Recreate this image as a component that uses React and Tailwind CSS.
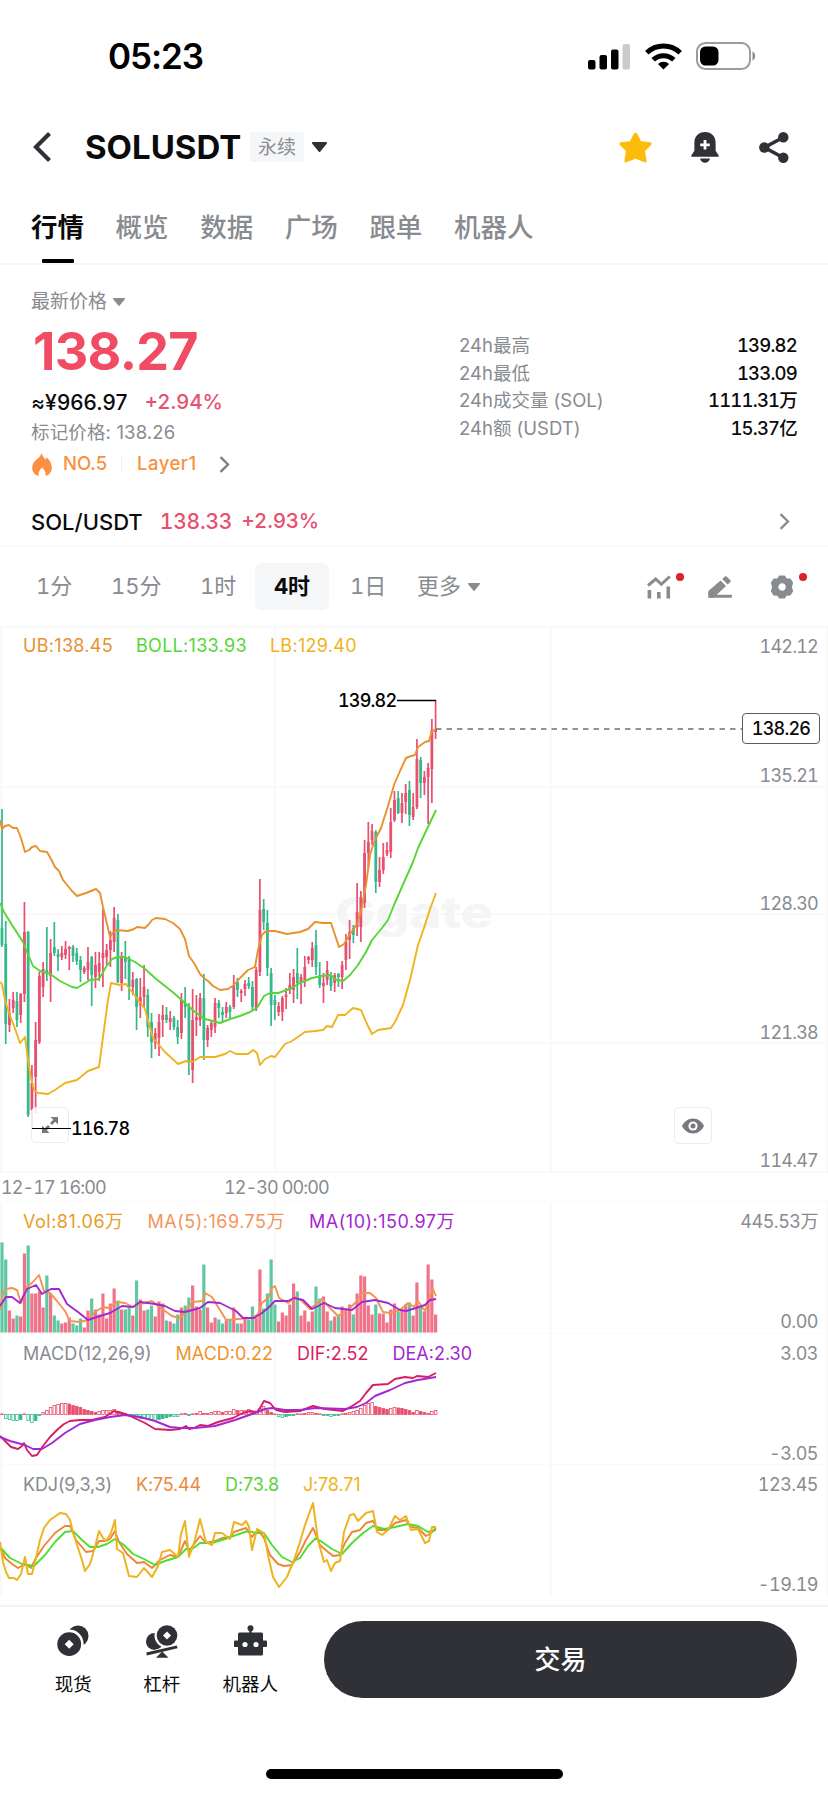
import React from 'react';

const RED = '#e8506e';
const GREEN = '#35b88c';
const ORANGE = '#e8912f';
const LIME = '#56d636';
const YELLOW = '#efb320';
const PURPLE = '#a428cf';
const PINK = '#d81e63';

const STEP = 3.738;
const xAt = (i) => 2 + i * STEP;

// [dir, high, bodyTop, bodyBottom, low] on the chart canvas, u = up, d = down
const candles = [
  ['d', 809, 928, 945, 947], ['d', 921, 944, 1024, 1044], ['u', 999, 1013, 1025, 1032], ['u', 992, 1000, 1008, 1013],
  ['d', 992, 1001, 1020, 1027], ['u', 993, 994, 1015, 1023], ['u', 902, 932, 994, 1002], ['d', 931, 932, 1115, 1117],
  ['u', 1065, 1083, 1110, 1128], ['u', 1022, 1040, 1077, 1113], ['u', 972, 976, 1042, 1044], ['u', 962, 969, 987, 997],
  ['d', 927, 970, 973, 981], ['u', 939, 953, 976, 1002], ['d', 922, 947, 953, 956], ['d', 949, 954, 957, 971],
  ['u', 946, 953, 957, 960], ['u', 941, 949, 955, 959], ['u', 946, 947, 949, 970], ['d', 945, 947, 956, 962],
  ['d', 948, 953, 961, 965], ['d', 956, 960, 970, 982], ['u', 966, 968, 972, 974], ['u', 947, 962, 970, 980],
  ['d', 956, 957, 975, 1006], ['u', 952, 965, 977, 988], ['u', 952, 963, 972, 981], ['u', 909, 953, 958, 987],
  ['u', 944, 950, 957, 965], ['u', 931, 940, 950, 967], ['u', 907, 918, 942, 952], ['d', 914, 920, 982, 983],
  ['u', 952, 958, 983, 991], ['d', 941, 957, 962, 979], ['d', 956, 958, 987, 1000], ['u', 972, 980, 987, 995],
  ['d', 978, 979, 1007, 1030], ['u', 978, 997, 1005, 1018], ['u', 965, 987, 997, 1008], ['d', 989, 995, 1027, 1037],
  ['d', 1013, 1022, 1042, 1058], ['u', 1028, 1033, 1043, 1049], ['u', 1014, 1022, 1038, 1056], ['u', 1005, 1015, 1020, 1037],
  ['d', 1007, 1015, 1020, 1023], ['u', 1011, 1018, 1022, 1030], ['d', 1016, 1018, 1027, 1030], ['d', 1020, 1027, 1037, 1044],
  ['u', 993, 1000, 1033, 1039], ['d', 987, 1003, 1007, 1018], ['d', 1003, 1007, 1063, 1075], ['u', 989, 1020, 1070, 1083],
  ['u', 995, 1017, 1020, 1036], ['u', 993, 998, 1020, 1026], ['d', 974, 998, 1040, 1060], ['u', 1025, 1028, 1040, 1047],
  ['u', 1020, 1023, 1030, 1037], ['u', 998, 1003, 1027, 1033], ['d', 1000, 1003, 1008, 1018], ['d', 1007, 1012, 1015, 1022],
  ['u', 1002, 1007, 1013, 1018], ['d', 1005, 1007, 1012, 1018], ['u', 975, 985, 1007, 1009], ['d', 978, 982, 990, 997],
  ['u', 989, 991, 993, 1002], ['u', 980, 984, 989, 996], ['d', 977, 983, 986, 989], ['d', 981, 987, 1007, 1011],
  ['u', 967, 970, 1008, 1011], ['u', 879, 910, 972, 976], ['d', 899, 909, 922, 930], ['d', 910, 923, 968, 976],
  ['d', 968, 973, 1005, 1026], ['d', 995, 1000, 1005, 1020], ['u', 1002, 1006, 1012, 1016], ['u', 996, 998, 1012, 1021],
  ['u', 988, 995, 997, 1009], ['u', 973, 985, 990, 994], ['u', 969, 977, 990, 1003], ['d', 948, 973, 983, 999],
  ['u', 974, 977, 983, 1004], ['u', 956, 967, 982, 987], ['u', 956, 957, 960, 964], ['u', 942, 948, 960, 967],
  ['d', 930, 945, 967, 975], ['d', 962, 975, 985, 988], ['u', 973, 983, 986, 1003], ['u', 961, 970, 980, 985],
  ['d', 972, 975, 986, 991], ['u', 973, 975, 983, 992], ['d', 973, 974, 977, 987], ['u', 961, 965, 977, 989],
  ['u', 934, 942, 960, 970], ['u', 920, 932, 940, 959], ['d', 925, 928, 935, 943], ['u', 883, 912, 927, 936],
  ['u', 891, 897, 927, 942], ['u', 840, 853, 903, 908], ['u', 822, 842, 853, 868], ['u', 824, 831, 840, 845],
  ['d', 830, 832, 882, 893], ['u', 857, 870, 882, 887], ['u', 843, 857, 870, 874], ['u', 842, 850, 854, 856],
  ['u', 808, 822, 852, 858], ['u', 791, 800, 820, 822], ['d', 791, 798, 813, 814], ['u', 793, 803, 813, 823],
  ['u', 784, 793, 802, 814], ['d', 781, 790, 815, 826], ['u', 793, 807, 817, 820], ['u', 739, 759, 807, 809],
  ['d', 757, 760, 783, 798], ['u', 771, 777, 783, 795], ['u', 763, 768, 777, 824], ['u', 719, 730, 769, 803],
  ['u', 700, 729, 732, 739],
];

const volumes = [
  90, 73, 22, 14, 17, 16, 79, 87, 39, 39, 41, 25, 57, 39, 17, 12, 9, 10, 15, 9, 7, 14, 5, 22, 34, 23, 18, 39, 14, 29,
  44, 32, 23, 23, 25, 17, 52, 33, 22, 23, 27, 16, 31, 29, 12, 11, 9, 18, 25, 27, 35, 47, 26, 23, 68, 25, 10, 15, 13, 9,
  12, 13, 25, 9, 9, 14, 13, 26, 15, 63, 24, 39, 73, 28, 11, 20, 17, 28, 49, 41, 17, 22, 11, 21, 46, 34, 36, 21, 12, 16,
  18, 26, 23, 28, 18, 39, 57, 56, 27, 18, 28, 19, 19, 10, 23, 29, 21, 23, 28, 30, 17, 50, 27, 21, 68, 53, 18,
];

const macdBars = [
  0, -4, -5, -6, -6, -5, 0, -6, -8, -6, -1, 2, 4, 7, 9, 10, 11, 11, 10.5, 9, 8, 7, 5, 4, 3, 2, 3, 4, 4, 4, 5, 3, 2, 1,
  -1, -2, -3, -4, -4, -4, -5, -6, -5, -4, -3, -2, -2, -2, 0, 1, -1, 0, 1, 3, 1, 1, 2, 3, 3, 2, 3, 3, 5, 4, 4, 4, 5, 3,
  3, 6, 8, 4, 2, 0, -2, -3, -2, -1, -1, 0, 0, 1, 2, 2, 1, 0, -1, -1, -2, -1, -1, 0, 1, 2, 3, 4, 6, 9, 11, 12, 8, 7, 6,
  5, 6, 7, 6.5, 6, 5, 4, 2, 4, 3, 2, 1, 3, 4,
];

const bollUpper =
  '0,820 2,829 5,826 9,825 13,828 17,828 21,838 25,852 29,850 32,847 36,846 40,851 47,852 51,859 55,867 59,871 63,880 72,891 77,896 86,893 96,889 100,893 103,907 107,924 110,937 112,934 116,930 128,931 134,929 137,927 145,928 149,924 152,920 156,918 165,919 173,923 180,929 185,939 189,956 194,963 200,974 205,979 208,981 213,986 220,990 228,989 234,985 240,978 248,970 255,967 258,950 262,935 266,931 275,931 287,934 300,932 308,929 315,922 323,923 331,923 335,935 339,947 344,944 350,934 357,924 361,912 366,885 370,855 374,842 381,828 388,806 394,785 400,771 406,758 411,756 415,755 418,747 425,742 429,741 432,731 436,729';
const bollMid =
  '0,903 4,912 12,925 23,942 27,952 33,966 40,971 50,974 60,981 72,987 77,988 90,980 99,979 106,967 112,959 118,957 125,957 135,962 145,969 155,978 165,986 175,994 185,1003 195,1012 205,1019 213,1021 220,1023 230,1019 240,1016 250,1012 257,1008 264,996 270,993 278,993 290,989 300,983 312,978 322,976 330,975 337,980 343,981 350,975 358,965 366,952 372,940 382,928 388,920 394,905 405,880 413,862 418,848 427,829 436,810';
const bollLower =
  '0,982 2,984 5,1000 9,1013 14,1026 20,1043 25,1037 28,1060 31,1078 34,1090 38,1093 48,1094 55,1090 65,1083 77,1080 88,1071 99,1067 103,1037 108,1000 111,983 120,985 126,984 132,992 145,1009 149,1024 153,1038 165,1052 178,1064 186,1061 192,1062 200,1057 215,1057 225,1054 230,1051 236,1054 248,1054 253,1050 257,1053 260,1065 265,1059 271,1056 275,1057 285,1044 292,1041 305,1032 315,1031 323,1030 327,1026 332,1027 338,1015 345,1015 353,1008 361,1010 367,1024 372,1034 378,1030 391,1028 395,1022 403,1005 410,980 418,945 424,928 430,909 436,893';

const ma5 =
  '0,1310 3,1293 6,1289 12,1288 17,1290 21,1303 27,1287 33,1282 39,1275 44,1291 50,1293 57,1301 65,1311 70,1321 80,1322 88,1320 95,1312 103,1307 108,1308 118,1302 125,1303 133,1307 140,1304 152,1301 158,1306 165,1311 172,1316 179,1318 185,1313 192,1302 203,1301 205,1293 212,1297 220,1310 226,1320 238,1319 252,1318 258,1314 262,1303 268,1298 272,1288 275,1286 279,1298 288,1303 296,1297 303,1302 310,1309 322,1299 330,1308 338,1316 350,1308 356,1302 362,1293 370,1293 376,1298 383,1312 390,1313 400,1310 408,1303 414,1307 418,1301 425,1311 430,1296 433,1289 436,1296';
const ma10 =
  '0,1306 6,1297 12,1297 20,1303 27,1289 36,1285 42,1294 51,1289 59,1289 67,1304 78,1312 88,1320 100,1316 110,1313 122,1306 133,1307 140,1302 155,1304 165,1306 175,1311 185,1312 200,1308 208,1302 220,1303 228,1307 236,1311 243,1318 254,1318 262,1313 268,1308 275,1301 288,1301 294,1298 303,1300 312,1309 324,1303 335,1308 352,1310 362,1302 375,1300 388,1303 400,1310 406,1311 416,1308 425,1305 430,1300 436,1299';

const dif =
  '0,1436 6,1442 11,1447 18,1449 22,1446 24,1443 27,1450 32,1456 37,1455 43,1446 50,1437 58,1429 64,1424 70,1421 80,1420 92,1420 105,1417 114,1411 122,1413 130,1416 145,1423 155,1429 170,1430 180,1429 186,1426 189,1429 194,1428 200,1425 208,1426 218,1422 233,1418 243,1413 250,1411 257,1412 260,1408 264,1401 270,1403 276,1410 285,1412 300,1411 313,1406 325,1409 343,1411 352,1406 360,1401 366,1393 373,1385 388,1384 395,1379 405,1377 413,1378 417,1376 428,1377 436,1373';
const dea =
  '0,1437 10,1441 25,1445 33,1449 42,1449 52,1443 65,1433 80,1424 95,1420 110,1417 125,1415 140,1417 155,1421 170,1427 180,1428 195,1428 215,1426 235,1420 255,1413 265,1409 272,1408 285,1410 300,1410 315,1408 345,1409 357,1407 366,1403 375,1396 390,1390 405,1383 418,1380 436,1377';

const kdjJ =
  '0,1542 3,1562 6,1572 9,1578 14,1578 17,1580 21,1574 25,1557 28,1574 32,1574 36,1558 40,1540 44,1528 50,1520 60,1513 66,1514 70,1520 73,1532 77,1545 82,1560 85,1571 90,1564 95,1547 99,1531 103,1538 106,1541 111,1533 115,1520 117,1549 123,1553 129,1576 137,1577 144,1568 152,1577 158,1566 162,1552 170,1550 178,1557 181,1534 185,1521 189,1557 195,1540 200,1519 206,1542 212,1545 215,1533 222,1533 230,1539 234,1522 242,1525 246,1521 249,1527 252,1550 257,1529 264,1533 268,1555 273,1577 279,1587 287,1577 294,1560 300,1542 305,1525 313,1503 318,1540 324,1562 327,1560 331,1571 335,1563 340,1561 344,1532 350,1515 354,1514 358,1521 366,1513 373,1511 377,1532 382,1535 388,1530 395,1516 400,1520 406,1516 411,1530 418,1529 425,1543 429,1541 432,1527 436,1527';
const kdjK =
  '0,1547 5,1558 12,1564 18,1568 25,1564 31,1568 36,1558 44,1546 55,1533 65,1526 70,1526 76,1540 82,1547 86,1552 93,1551 99,1541 106,1541 110,1539 115,1531 119,1542 127,1554 137,1563 144,1562 152,1568 160,1560 170,1555 178,1557 185,1541 189,1551 200,1536 206,1543 215,1541 222,1538 230,1537 234,1532 246,1528 252,1537 258,1530 264,1538 270,1555 278,1564 284,1566 292,1565 300,1552 306,1540 313,1528 320,1545 328,1552 333,1556 340,1555 345,1543 352,1532 360,1530 366,1523 373,1521 378,1530 388,1530 395,1523 406,1520 411,1527 418,1528 426,1536 430,1534 436,1528';
const kdjD =
  '0,1547 10,1558 22,1564 34,1566 45,1555 55,1542 65,1532 73,1531 82,1540 90,1547 98,1547 107,1544 115,1539 124,1545 133,1554 144,1559 155,1565 165,1561 178,1557 186,1549 192,1549 200,1543 212,1543 225,1539 236,1535 248,1531 256,1533 264,1533 272,1545 282,1557 292,1562 300,1558 308,1546 316,1538 322,1542 332,1549 342,1554 352,1543 363,1533 373,1526 384,1529 395,1527 408,1524 418,1526 428,1532 436,1530';

const Line = ({ points, color, width = 1.9 }) => (
  <polyline points={points} fill="none" stroke={color} strokeWidth={width} strokeLinejoin="round" />
);

const Caret = ({ className }) => (
  <svg viewBox="0 0 12 8" className={className} fill="currentColor">
    <path d="M.8 0h10.4c.7 0 1 .8.6 1.3L6.700 7.500a.9.9 0 0 1-1.4 0L.2 1.300C-.2.8.100 0 .8 0Z" />
  </svg>
);

const Chevron = ({ className }) => (
  <svg viewBox="0 0 10 16" className={className} fill="none" stroke="currentColor" strokeWidth="2.200">
    <path d="m1.300 1 7 7-7 7" />
  </svg>
);

const StatusBar = () => (
  <div className="flex h-[108px] items-center justify-between pl-[108px] pr-[72px] pt-[4px]">
    <span className="text-[35px] font-semibold tracking-[-1.100px] text-black">05:23</span>
    <div className="flex items-center gap-[14px]">
      <svg viewBox="0 0 43 27" className="h-[27px] w-[43px]">
        <rect x="0" y="17" width="7.500" height="9.500" rx="2" />
        <rect x="11.500" y="12" width="7.500" height="14.500" rx="2" />
        <rect x="23" y="6.500" width="7.500" height="20" rx="2" />
        <rect x="34.500" y="1" width="7.500" height="25.500" rx="2" fill="#cbcbcb" />
      </svg>
      <svg viewBox="0 0 37 27" className="h-[27px] w-[37px]" fill="none" stroke="#000" strokeWidth="5">
        <path d="M1.800 9.700a24 24 0 0 1 33.400 0" />
        <path d="M8.200 16.800a15 15 0 0 1 20.600 0" />
        <path d="M18.500 26.600 12.900 21a8 8 0 0 1 11.200 0Z" fill="#000" stroke="none" />
      </svg>
      <svg viewBox="0 0 60 28" className="h-[28px] w-[60px]">
        <rect x="1" y="1" width="53" height="26" rx="8.500" fill="none" stroke="#9c9c9c" strokeWidth="2" />
        <rect x="4" y="4.500" width="18.500" height="19" rx="5.500" />
        <path d="M56.500 9.500c3.600 1.500 3.600 7.500 0 9Z" fill="#8c8c8c" />
      </svg>
    </div>
  </div>
);

const Header = () => (
  <div className="flex h-[78px] items-center pl-[32px] pr-[38px] text-[#2f3136]">
    <svg viewBox="0 0 20 30" className="h-[30px] w-[20px]" fill="none" stroke="currentColor" strokeWidth="4.200">
      <path d="M17.500 1.500 4 15l13.500 13.500" />
    </svg>
    <span className="ml-[33px] w-[155px] whitespace-nowrap pt-[2px] text-[33px] font-bold text-[#0b0b0c]">SOLUSDT</span>
    <span className="ml-[10px] flex h-[30px] w-[54px] items-center justify-center rounded-[3px] bg-[#f5f6f8] pt-[2px] text-[19px] text-[#8b8e93]">
      永续
    </span>
    <Caret className="ml-[8px] h-[10px] w-[15px]" />
    <div className="ml-auto flex items-center">
      <svg viewBox="0 0 33 31" className="h-[31px] w-[33px]" fill="#fdbc0b">
        <path d="M14.900 1.600c.7-1.300 2.500-1.300 3.200 0l4 7.600 9 1.100c1.500.2 2 2 .9 3L26 19l1.600 9.600c.2 1.400-.8 2.300-2.100 1.700L16.500 26.800l-9 3.500c-1.300.6-2.300-.3-2.100-1.700L7 19l-6-5.700c-1.100-1-.6-2.800.9-3l9-1.100Z" />
      </svg>
      <svg viewBox="0 0 28 31" className="ml-[39px] h-[31px] w-[28px]" fill="currentColor">
        <path d="M14 0C7.600 0 3.400 4.600 3.400 10.500v8.300L.3 23.500c-.4.700 0 1.300.7 1.300h26c.7 0 1.100-.6.7-1.300l-3.100-4.700v-8.300C24.600 4.600 20.400 0 14 0Z" />
        <path d="M9 26.500h10c-.6 2.600-2.400 4.200-5 4.200s-4.400-1.600-5-4.200Z" />
        <path d="M14 8v9.600M9.200 12.800h9.600" stroke="#fff" strokeWidth="2.800" />
      </svg>
      <svg viewBox="0 0 30 31" className="ml-[40px] mr-px h-[31px] w-[30px]" fill="currentColor">
        <path d="M24 5.500 5.500 15.500 24 25.500" fill="none" stroke="currentColor" strokeWidth="3.600" />
        <circle cx="24.300" cy="5.300" r="5.200" />
        <circle cx="5.300" cy="15.500" r="5.200" />
        <circle cx="24.300" cy="25.700" r="5.200" />
      </svg>
    </div>
  </div>
);

const Tabs = () => {
  const tabs = ['行情', '概览', '数据', '广场', '跟单', '机器人'];
  return (
    <div className="flex h-[79px] gap-[31.600px] border-b-2 border-[#f6f7f8] pl-[31px]">
      {tabs.map((tab, index) => (
        <div
          key={tab}
          className={
            index === 0
              ? 'flex flex-col items-center justify-between pt-[21px] text-[26.500px] font-bold leading-[40px] text-[#0b0b0c]'
              : 'pt-[21px] text-[26.500px] font-medium leading-[40px] text-[#888b8f]'
          }
        >
          {tab}
          {index === 0 && <span className="h-[4px] w-[32px] rounded-[1px] bg-black" />}
        </div>
      ))}
    </div>
  );
};

const PriceSummary = () => {
  const stats = [
    { label: '24h最高', value: '139.82' },
    { label: '24h最低', value: '133.09' },
    { label: '24h成交量 (SOL)', value: '1111.31万' },
    { label: '24h额 (USDT)', value: '15.37亿' },
  ];

  return (
    <div className="flex h-[217px] pl-[31px] pr-[31px] pt-[21px] text-[#888b8f]">
      <div className="w-[428px]">
        <div className="flex h-[32px] items-center text-[19px]">
          最新价格
          <Caret className="ml-[6px] h-[8px] w-[12px]" />
        </div>
        <div className="flex h-[68px] items-center pl-[2px] text-[52px] font-bold tracking-[-0.700px] text-[#f04c63]">138.27</div>
        <div className="flex h-[33px] items-center text-[21px] font-medium">
          <span className="tracking-[0.100px] text-[#0b0b0c]">≈¥966.97</span>
          <span className="ml-[17px] text-[20.500px] text-[#e8506e]">+2.94%</span>
        </div>
        <div className="flex h-[27px] items-center text-[18.500px] tracking-[0.150px]">标记价格: 138.26</div>
        <div className="flex h-[36px] items-center text-[18.500px] font-medium text-[#fb9043]">
          <svg viewBox="0 0 20 23" className="ml-px h-[23px] w-[20px]" fill="#fb9043">
            <path d="M9.500 0c.8 2.900 2.400 4.500 4 6.600.6-.7.9-1.500 1-2.300 3.300 3 5.300 6.500 5.300 10.400 0 4.300-2.500 7.200-6.300 8.300.7-2.900-.4-5.600-3.300-8.500-3.200 2.700-4.200 5.600-3.400 8.500C2.800 21.900.2 19 .2 14.900.2 11 2 9 4.500 6.600 6.700 4.600 8.800 3 9.500 0Z" />
          </svg>
          <span className="ml-[11px] w-[43px] whitespace-nowrap">NO.5</span>
          <span className="ml-[15px] h-[18px] w-px bg-[#efefef]" />
          <span className="ml-[15px] tracking-[0.500px]">Layer1</span>
          <Chevron className="ml-[22px] h-[17px] w-[11px] text-[#7b7e82]" />
        </div>
      </div>
      <div className="flex-1 pt-[46px]">
        {stats.map((item) => (
          <div key={item.label} className="flex h-[27.700px] items-center justify-between text-[18.500px]">
            <span>{item.label}</span>
            <span className="font-medium tabular-nums tracking-[-0.800px] text-[#0b0b0c]">{item.value}</span>
          </div>
        ))}
      </div>
    </div>
  );
};

const PairRow = () => (
  <div className="flex h-[65px] items-center border-b-2 border-[#fbfbfc] pl-[31px] pr-[38px] pt-[16px] text-[21px] font-medium leading-none">
    <span className="text-[22px] text-[#0b0b0c]">SOL/USDT</span>
    <span className="ml-[17px] tabular-nums tracking-[-0.200px] text-[#e8506e]">138.33</span>
    <span className="ml-[9px] text-[20.500px] text-[#e8506e]">+2.93%</span>
    <Chevron className="ml-auto h-[17px] w-[11px] text-[#888b8f]" />
  </div>
);

const Intervals = () => (
  <div className="flex h-[79px] items-center pl-[36px] pr-[34px] text-[22px] tabular-nums text-[#888b8f]">
    <span className="w-[75px]">1分</span>
    <span className="w-[89px]">15分</span>
    <span className="w-[55px]">1时</span>
    <span className="flex h-[47px] w-[74px] items-center justify-center rounded-[7px] bg-[#f4f6f8] font-bold text-[#0b0b0c]">4时</span>
    <span className="ml-[21px] w-[67px]">1日</span>
    <span>更多</span>
    <Caret className="ml-[7px] h-[8px] w-[12px]" />
    <div className="ml-auto flex items-center">
      <div className="relative">
        <svg viewBox="0 0 24 24" className="h-[24px] w-[24px]" fill="none" stroke="currentColor" strokeWidth="3.600">
          <path d="M1 10.500 8.700 4l5.600 5.300L22.800 1.500" strokeWidth="3" />
          <path d="M2.400 15v8.500M11.800 17v6.500M21.300 11.500v12" />
        </svg>
        <span className="absolute -right-[13px] -top-[2px] h-[8px] w-[8px] rounded-full bg-[#dc2127]" />
      </div>
      <svg viewBox="0 0 24 24" className="ml-[37px] h-[24px] w-[24px]" fill="currentColor">
        <path d="M12.600 5.500 1.200 15.300A3 3 0 0 0 .2 17.500v5.300h5.300L18 10.900Z" />
        <path d="m14.200 4.100 2.700-2.500c.5-.5 1.200-.5 1.700 0l3.800 3.700c.5.5.5 1.200 0 1.700l-2.800 2.500Z" />
        <path d="M3 19.800h20.800v3H1Z" />
      </svg>
      <div className="relative ml-[38px]">
        <svg viewBox="0 0 24 24" className="h-[24px] w-[24px]" fill="currentColor">
          <path
            fillRule="evenodd"
            d="M9.600 1.200h4.800l1.800 2.700 3.800.2 2.400 3.800L21.200 12l1.200 4.100-2.400 3.800-3.800.2-1.800 2.700H9.600l-1.800-2.700-3.800-.2-2.400-3.800L2.800 12 1.600 7.900 4 4.100l3.800-.2ZM12 7.600a4.400 4.400 0 1 0 0 8.800 4.400 4.400 0 0 0 0-8.800Z"
            stroke="currentColor"
            strokeWidth="1.400"
            strokeLinejoin="round"
          />
        </svg>
        <span className="absolute -right-[13px] -top-[2px] h-[8px] w-[8px] rounded-full bg-[#dc2127]" />
      </div>
    </div>
  </div>
);

const Grid = ({ top, bottom, rows = [] }) => (
  <g stroke="#f9f9fa" strokeWidth="2">
    {[1, 275, 551, 827].map((x) => (
      <line key={x} x1={x} x2={x} y1={top} y2={bottom} />
    ))}
    {rows.map((y) => (
      <line key={y} x1="0" x2="828" y1={y} y2={y} />
    ))}
  </g>
);

const MainChart = () => (
  <div className="relative h-[547px]">
    <svg viewBox="0 626 828 547" className="absolute inset-0 h-full w-full">
      <Grid top={626} bottom={1172} rows={[627, 787, 914, 1043, 1172]} />
      <text x="335" y="928" fontSize="43" fontWeight="800" fill="#f4f5f6" textLength="158" lengthAdjust="spacingAndGlyphs">
        Ggate
      </text>
      {candles.map(([dir, high, top, bottom, low], i) => {
        const color = dir === 'u' ? RED : GREEN;
        return (
          <g key={i} fill={color}>
            <rect x={xAt(i) - 0.85} y={high} width="1.7" height={low - high} />
            <rect x={xAt(i) - 1.4} y={top} width="2.8" height={bottom - top} />
          </g>
        );
      })}
      <Line points={bollUpper} color={ORANGE} />
      <Line points={bollMid} color={LIME} />
      <Line points={bollLower} color={YELLOW} />
      <line x1="397" x2="436" y1="700.5" y2="700.5" stroke="#000" strokeWidth="1.5" />
      <line x1="436" x2="742" y1="729" y2="729" stroke="#6d6f73" strokeWidth="1.5" strokeDasharray="5.500 5" />
    </svg>

    <div className="absolute left-[23px] top-[9px] flex gap-[23px] text-[18px] leading-[22px] tracking-[0.300px]">
      <span className="text-[#e8912f]">UB:138.45</span>
      <span className="text-[#56d636]">BOLL:133.93</span>
      <span className="text-[#efb320]">LB:129.40</span>
    </div>

    <div className="absolute right-[10px] top-[11px] flex h-[534px] flex-col justify-between text-right text-[18px] leading-[20px] tabular-nums tracking-[-0.800px] text-[#888b8f]">
      {['142.12', '135.21', '128.30', '121.38', '114.47'].map((price) => (
        <span key={price}>{price}</span>
      ))}
    </div>

    <span className="absolute left-[338px] top-[64px] text-[18px] font-medium leading-[22px] tabular-nums tracking-[-0.800px] text-black">
      139.82
    </span>
    <span className="absolute left-[742px] top-[87px] flex h-[31px] w-[78px] items-center justify-center rounded-[4px] border border-[#5a5c60] bg-white text-[18px] font-medium tabular-nums tracking-[-0.800px] text-[#0b0b0c]">
      138.26
    </span>

    <div className="absolute left-[31px] top-[481px] flex h-[36px] w-[38px] items-center justify-center rounded-[5px] border border-[#ececee] bg-white/80">
      <svg viewBox="0 0 18 18" className="h-[18px] w-[18px]" fill="#77797d">
        <path d="M9.500 1H17v7.500l-2.700-2.700-3.300 3.300-2-2 3.300-3.300Z" />
        <path d="M8.500 17H1V9.500l2.700 2.700L7 8.900l2 2-3.200 3.300Z" />
      </svg>
    </div>
    <span className="absolute left-[32px] top-[502px] h-px w-[39px] bg-black" />
    <span className="absolute left-[71px] top-[492px] text-[18px] font-medium leading-[22px] tabular-nums tracking-[-0.800px] text-black">
      116.78
    </span>

    <div className="absolute left-[674px] top-[481px] flex h-[37px] w-[38px] items-center justify-center rounded-[5px] border border-[#ececee] bg-white">
      <svg viewBox="0 0 22 16" className="h-[16px] w-[22px]">
        <path d="M0 8c2.500-4.800 6.400-7.500 11-7.500S19.500 3.200 22 8c-2.500 4.800-6.400 7.500-11 7.500S2.500 12.800 0 8Z" fill="#77797d" />
        <circle cx="11" cy="8" r="4.600" fill="#fff" />
        <circle cx="11" cy="8" r="2.500" fill="#77797d" />
      </svg>
    </div>
  </div>
);

const TimeAxis = () => (
  <div className="flex h-[28px] items-center pl-[1px] pt-[1px] text-[18px] tabular-nums tracking-[-0.900px] text-[#888b8f]">
    <span className="w-[223px]">12-17 16:00</span>
    <span>12-30 00:00</span>
  </div>
);

// Sub chart with its legend on the left and the value range on the right
const Indicator = ({ top, legend, max, min, className, children }) => (
  <div className={`relative h-[132px] ${className}`}>
    <svg viewBox={`0 ${top} 828 132`} className="absolute inset-0 h-full w-full">
      <Grid top={top} bottom={top + 132} rows={[top]} />
      {children}
    </svg>
    <div className="relative flex h-full justify-between pl-[23px] pr-[10px] pt-[10px] text-[18px] leading-[22px]">
      <div className="flex gap-[24px] whitespace-nowrap">{legend}</div>
      <div className="flex flex-col justify-between text-right tabular-nums tracking-[-0.500px] text-[#888b8f]">
        <span>{max}</span>
        <span>{min}</span>
      </div>
    </div>
  </div>
);

const VolumeChart = () => (
  <Indicator
    top={1201}
    max="445.53万"
    min="0.00"
    className="tracking-[0.500px]"
    legend={
      <>
        <span className="text-[#eb9c24]">Vol:81.06万</span>
        <span className="text-[#f5955a]">MA(5):169.75万</span>
        <span className="text-[#a428cf]">MA(10):150.97万</span>
      </>
    }
  >
    {volumes.map((h, i) => (
      <rect
        key={i}
        x={xAt(i) - 1.6}
        y={1332.5 - h}
        width="3.2"
        height={h}
        fill={candles[i][0] === 'u' ? '#f0738a' : '#5fc8a2'}
      />
    ))}
    <Line points={ma5} color="#f3944f" />
    <Line points={ma10} color={PURPLE} />
  </Indicator>
);

const MacdChart = () => (
  <Indicator
    top={1333}
    max="3.03"
    min="-3.05"
    className="tracking-normal"
    legend={
      <>
        <span className="text-[#888b8f]">MACD(12,26,9)</span>
        <span className="text-[#f0932b]">MACD:0.22</span>
        <span className="text-[#d81e63]">DIF:2.52</span>
        <span className="text-[#a428cf]">DEA:2.30</span>
      </>
    }
  >
    {macdBars.map((v, i) => {
      const color = v >= 0 ? RED : GREEN;
      const h = Math.max(Math.abs(v), 0.6);
      // growing bars are drawn hollow
      const hollow = i > 0 && Math.abs(v) >= Math.abs(macdBars[i - 1]) && Math.abs(v) > 1;
      return (
        <rect
          key={i}
          x={xAt(i) - 1.3}
          y={v >= 0 ? 1414.5 - h : 1414.5}
          width="2.6"
          height={h}
          fill={hollow ? '#fff' : color}
          stroke={color}
          strokeWidth="0.8"
        />
      );
    })}
    <Line points={dif} color={PINK} />
    <Line points={dea} color={PURPLE} />
  </Indicator>
);

const KdjChart = () => (
  <Indicator
    top={1464}
    max="123.45"
    min="-19.19"
    className="-mt-px tracking-[-0.150px]"
    legend={
      <>
        <span className="text-[#888b8f]">KDJ(9,3,3)</span>
        <span className="text-[#ea8a3c]">K:75.44</span>
        <span className="text-[#56d636]">D:73.8</span>
        <span className="text-[#efb320]">J:78.71</span>
      </>
    }
  >
    <Line points={kdjK} color="#ee8434" />
    <Line points={kdjD} color="#4ede2c" />
    <Line points={kdjJ} color={YELLOW} width={2} />
  </Indicator>
);

const SpotIcon = () => (
  <svg viewBox="0 0 32 32" className="h-[32px] w-[32px]" fill="#2f3136">
    <circle cx="21" cy="11" r="10.500" />
    <circle cx="12.200" cy="19" r="14.400" fill="#fff" />
    <circle cx="12.200" cy="19.200" r="11.900" />
    <path d="m12.200 14.700 4.500 4.500-4.500 4.500-4.500-4.500Z" fill="#fff" />
  </svg>
);

const MarginIcon = () => (
  <svg viewBox="0 0 33 33" className="h-[33px] w-[33px]" fill="#2f3136">
    <circle cx="9.500" cy="16.500" r="8.500" />
    <circle cx="22" cy="10.500" r="12.500" fill="#fff" />
    <circle cx="22" cy="10.500" r="10.300" />
    <path d="m22 6.500 4 4-4 4-4-4Z" fill="#fff" />
    <path d="M.5 27 32.300 19.500v5L1.500 31Z" fill="#fff" />
    <path d="m1.200 27.600 30.600-7 .7 2.600-30.600 7.200Z" />
    <path d="m17.200 26.400 6.300 6.300H11Z" />
  </svg>
);

const RobotIcon = () => (
  <svg viewBox="0 0 33 32" className="h-[32px] w-[33px]" fill="#2f3136">
    <circle cx="16.500" cy="3.200" r="3" />
    <rect x="15.300" y="4" width="2.400" height="5" />
    <rect x="4" y="7.500" width="25" height="23" rx="1.500" />
    <rect x="0" y="15.500" width="33" height="6.500" rx="1" />
    <circle cx="11" cy="19.500" r="2.600" fill="#fff" />
    <circle cx="22" cy="19.500" r="2.600" fill="#fff" />
  </svg>
);

const BottomBar = () => {
  const actions = [
    { label: '现货', Icon: SpotIcon },
    { label: '杠杆', Icon: MarginIcon },
    { label: '机器人', Icon: RobotIcon },
  ];

  return (
    <div className="flex border-t-2 border-[#f4f4f5] pl-[29px] pr-[31px] pt-[14px]">
      {actions.map(({ label, Icon }) => (
        <div key={label} className="flex w-[88.500px] flex-col items-center pt-[4px]">
          <span className="flex h-[36px] items-start">
            <Icon />
          </span>
          <span className="mt-[10px] text-[18.500px] leading-[26px] text-[#0b0b0c]">{label}</span>
        </div>
      ))}
      <button className="ml-auto h-[77px] w-[473px] rounded-full bg-[#2f3136] text-[26px] font-medium text-white">
        交易
      </button>
    </div>
  );
};

const App = () => (
  <div className="h-[1795px] w-[828px] overflow-hidden bg-white font-['Inter','Noto_Sans_CJK_SC',sans-serif]">
    <StatusBar />
    <Header />
    <Tabs />
    <PriceSummary />
    <PairRow />
    <Intervals />
    <MainChart />
    <TimeAxis />
    <VolumeChart />
    <MacdChart />
    <KdjChart />
    {/* lower part of the last panel */}
    <div className="h-[9px]" />
    <BottomBar />
    <div className="mx-auto mt-[71px] h-[10px] w-[297px] rounded-full bg-black" />
  </div>
);

export default App;
